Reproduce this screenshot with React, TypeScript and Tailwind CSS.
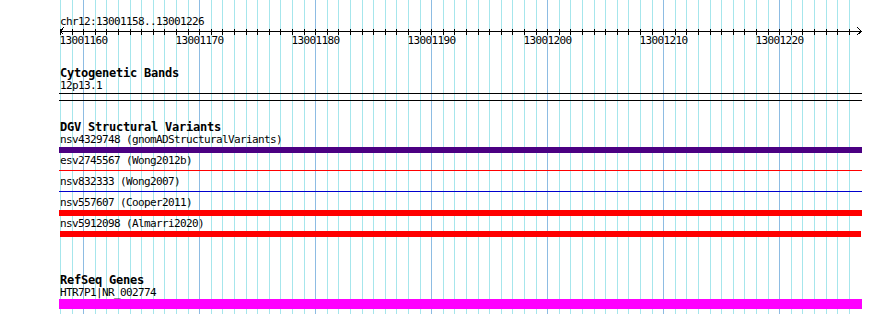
import React from 'react'

const START = 13001158
const END = 13001226
const LEFT = 60
const STEP = 11.6

const positions = Array.from({ length: END - START + 1 }, (_, i) => ({
  pos: START + i,
  x: Math.round(LEFT + STEP * i),
}))

const variants = [
  { label: 'nsv4329748 (gnomADStructuralVariants)', kind: 'thick', color: 'bg-[#4b0082]' },
  { label: 'esv2745567 (Wong2012b)', kind: 'thin', color: 'bg-[#ff0000]' },
  { label: 'nsv832333 (Wong2007)', kind: 'thin', color: 'bg-[#0000cd]' },
  { label: 'nsv557607 (Cooper2011)', kind: 'thick', color: 'bg-[#ff0000]' },
  { label: 'nsv5912098 (Almarri2020)', kind: 'inset', color: 'bg-[#ff0000]' },
]

function Grid() {
  return (
    <svg className="absolute inset-0" width={890} height={314}>
      {positions.map((p) => (
        <rect
          key={p.pos}
          x={p.x}
          y={0}
          width={1}
          height={314}
          fill={p.pos % 10 === 0 ? '#8dbce3' : '#a6e6ec'}
        />
      ))}
    </svg>
  )
}

function Ruler() {
  // block covers page rows 26..46, line sits on row 31
  return (
    <svg width={890} height={21} className="block -ml-[59px]">
      <rect x={60} y={5} width={802} height={1} fill="#000" />
      {positions.map((p) => (
        <rect key={p.pos} x={p.x} y={3} width={1} height={6} fill="#000" />
      ))}
      <polyline points="63.5,1.5 60.5,5.5 63.5,8.5" fill="none" stroke="#000" strokeWidth={1} shapeRendering="crispEdges" />
      <polyline points="857.5,1.5 861.5,5.5 857.5,8.5" fill="none" stroke="#000" strokeWidth={1} shapeRendering="crispEdges" />
      {positions
        .filter((p) => p.pos % 10 === 0)
        .map((p) => (
          <text
            key={p.pos}
            x={p.x + 0.5}
            y={18}
            textAnchor="middle"
            fontFamily="'DejaVu Sans Mono', monospace"
            fontSize={11}
            letterSpacing={-0.62}
            fill="#000"
          >
            {p.pos}
          </text>
        ))}
    </svg>
  )
}

function Heading({ children, className = '' }: { children: React.ReactNode; className?: string }) {
  return (
    <div className={`pl-[1px] h-[13px] leading-[13px] text-[12px] font-bold tracking-[-0.22px] text-black whitespace-nowrap ${className}`}>
      {children}
    </div>
  )
}

function Label({ children }: { children: React.ReactNode }) {
  return (
    <div className="pl-[1px] h-[12px] leading-[12px] text-[11px] tracking-[-0.62px] text-black whitespace-nowrap">
      {children}
    </div>
  )
}

export default function App() {
  return (
    <div className="relative w-[890px] h-[314px] bg-white overflow-hidden font-['DejaVu_Sans_Mono',monospace]">
      <Grid />
      <div className="relative pl-[59px] w-[862px]">
        <div className="pt-[16px] h-[26px]">
          <Label>chr12:13001158..13001226</Label>
        </div>
        <Ruler />

        <Heading className="mt-[20px]">Cytogenetic Bands</Heading>
        <Label>12p13.1</Label>
        <div className="mt-[1px] h-[8px] border-y border-black" />

        <Heading className="mt-[20px]">DGV Structural Variants</Heading>
        {variants.map((v) => (
          <div key={v.label} className="h-[21px]">
            <Label>{v.label}</Label>
            <div className="h-[9px]">
              {v.kind === 'thick' && <div className={`mt-[1px] h-[6px] ${v.color}`} />}
              {v.kind === 'inset' && <div className={`mt-[1px] ml-[1px] mr-[1px] h-[6px] ${v.color}`} />}
              {v.kind === 'thin' && <div className={`mt-[3px] h-[1px] ${v.color}`} />}
            </div>
          </div>
        ))}

        <Heading className="mt-[35px]">RefSeq Genes</Heading>
        <Label>HTR7P1|NR_002774</Label>
        <div className="h-[10px] bg-[#ff00ff]" />
      </div>
    </div>
  )
}
